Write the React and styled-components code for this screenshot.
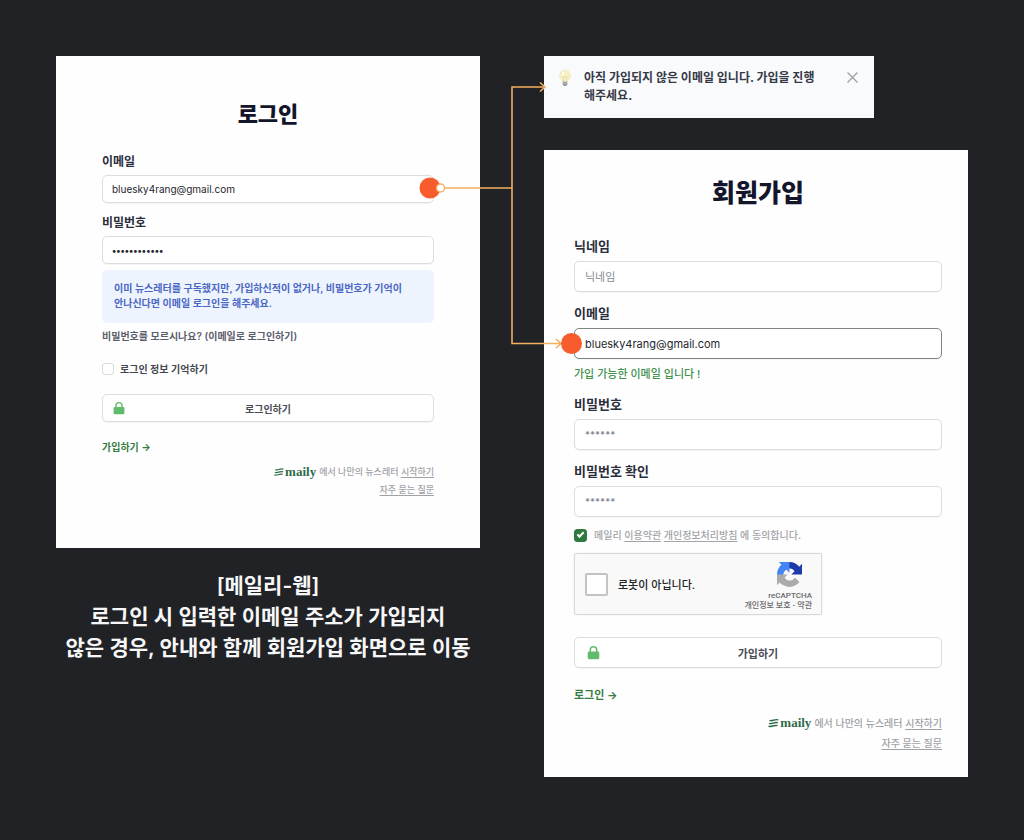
import React from "react";
import styled, { createGlobalStyle, css } from "styled-components";

const GlobalStyle = createGlobalStyle`
  *, *::before, *::after { box-sizing: border-box; }
  body {
    margin: 0;
    background: #202226;
    color: #252a37;
    font-family: Inter, "Noto Sans CJK KR", sans-serif;
  }
  h1, p { margin: 0; }
  button, input { font-family: inherit; }
`;

const Board = styled.main`
  display: grid;
  grid-template-columns: minmax(0, 1fr) minmax(0, 1fr);
  align-items: start;
  gap: 64px;
  padding: 56px;

  @media (max-width: 860px) {
    grid-template-columns: minmax(0, 1fr);
    padding: 24px;
  }
`;

const Column = styled.section`
  position: relative;
  display: flex;
  flex-direction: column;
`;

const Card = styled.form`
  display: flex;
  flex-direction: column;
  background: #fefefe;
  padding: ${(p) => (p.$large ? "27px 26px 26px 30px" : "43px 46px 50px")};
`;

const Title = styled.h1`
  text-align: center;
  font-weight: 900;
  color: #14152b;
  font-size: ${(p) => (p.$large ? 25 : 22)}px;
  line-height: ${(p) => (p.$large ? 32 : 30)}px;
  margin-bottom: ${(p) => (p.$large ? 28 : 25)}px;
`;

const FieldBox = styled.div`
  display: flex;
  flex-direction: column;
  gap: ${(p) => (p.$large ? 6 : 5)}px;
  margin-bottom: 12px;
`;

const Label = styled.label`
  font-weight: 700;
  color: #2a2d3c;
  font-size: ${(p) => (p.$large ? 13 : 12)}px;
  line-height: ${(p) => (p.$large ? 18 : 16)}px;
`;

const TextInput = styled.input`
  width: 100%;
  height: ${(p) => (p.$large ? 31 : 28)}px;
  padding: 0 ${(p) => (p.$large ? 10 : 9)}px;
  border: 1px solid ${(p) => (p.$active ? "#7c8583" : "#dcdddf")};
  border-radius: 5px;
  background: #fff;
  box-shadow: 0 1px 1px rgba(0, 0, 0, 0.04);
  color: #23262d;
  font-size: ${(p) => (p.$large ? 11 : 10)}px;
  outline: none;

  &[type="password"] {
    font-size: 9px;
    font-weight: 700;
  }

  &::placeholder { color: #858a93; opacity: 1; }
`;

const Notice = styled.p`
  margin-top: -6px;
  padding: 11px 12px 12px;
  border-radius: 5px;
  background: #edf4fd;
  color: #4a66c4;
  font-size: 10px;
  font-weight: 600;
  line-height: 15px;
`;

const TextLink = styled.a`
  align-self: flex-start;
  color: ${(p) => (p.$green ? "#367d45" : "#5b5d6b")};
  font-weight: ${(p) => (p.$green ? 700 : 600)};
  font-size: ${(p) => (p.$large ? 11 : 10)}px;
  line-height: 16px;
  text-decoration: none;
  margin-top: ${(p) => p.$gap}px;
`;

const CheckRow = styled.div`
  display: flex;
  align-items: center;
  gap: ${(p) => (p.$large ? 7 : 6)}px;
  min-height: 16px;
  margin-top: ${(p) => (p.$large ? -2 : 17)}px;
  color: ${(p) => (p.$large ? "#a2a4a8" : "#44474f")};
  font-size: 10px;
  font-weight: ${(p) => (p.$large ? 500 : 600)};
  line-height: 16px;

  a { color: inherit; text-underline-offset: 2px; }
`;

const checkedMark = css`
  border-color: #2f7a41;
  background: #2f7a41;

  &::after {
    content: "";
    width: 7px;
    height: 4px;
    margin-bottom: 2px;
    border-left: 2px solid #fff;
    border-bottom: 2px solid #fff;
    transform: rotate(-45deg);
  }
`;

const CheckBox = styled.input`
  appearance: none;
  display: grid;
  place-items: center;
  flex: none;
  width: ${(p) => p.$size}px;
  height: ${(p) => p.$size}px;
  margin: 0;
  border: ${(p) => (p.$size > 20 ? "2px solid #c3c3c3" : "1px solid #d8dadd")};
  border-radius: ${(p) => (p.$size > 20 ? 2 : 3)}px;
  background: #fff;

  &:checked { ${checkedMark} }
`;

const Submit = styled.button`
  display: grid;
  grid-template-columns: 16px 1fr 16px;
  align-items: center;
  height: ${(p) => (p.$large ? 31 : 28)}px;
  margin-top: ${(p) => (p.$large ? 22 : 17)}px;
  padding: 0 ${(p) => (p.$large ? 10 : 8)}px;
  border: 1px solid #dcdddf;
  border-radius: 5px;
  background: #fff;
  box-shadow: 0 1px 1px rgba(0, 0, 0, 0.04);
  color: #4a4d56;
  font-size: ${(p) => (p.$large ? 11 : 10)}px;
  font-weight: 600;

  svg { justify-self: center; }
`;

const Valid = styled.p`
  margin: -5px 0 13px;
  color: #43914f;
  font-size: 11px;
  font-weight: 500;
  line-height: 16px;
`;

const Footer = styled.footer`
  display: flex;
  flex-direction: column;
  align-items: flex-end;
  gap: ${(p) => (p.$large ? 4 : 2)}px;
  margin-top: ${(p) => (p.$large ? 12 : 9)}px;
  color: #a0a2a7;
  font-size: ${(p) => (p.$large ? 10 : 9)}px;
  font-weight: 500;
  line-height: 16px;

  a { color: inherit; text-underline-offset: 2px; }
`;

const FooterLine = styled.div`
  display: flex;
  align-items: center;
  gap: 3px;
`;

const Brand = styled.span`
  display: flex;
  align-items: center;
  gap: 1px;
  color: #2f6b4b;
  font-family: "Liberation Serif", serif;
  font-weight: 700;
  font-size: 13px;
`;

const Caption = styled.p`
  margin-top: 22px;
  text-align: center;
  color: #f7f7f8;
  font-size: 21px;
  font-weight: 600;
  line-height: 31px;
`;

const Toast = styled.div`
  display: flex;
  align-items: flex-start;
  width: 330px;
  max-width: 100%;
  margin-bottom: 32px;
  padding: 13px 15px 13px 14px;
  background: #f9fafc;
`;

const ToastText = styled.p`
  flex: 1;
  margin-left: 12px;
  padding-right: 24px;
  color: #353846;
  font-size: 12px;
  font-weight: 700;
  line-height: 18px;
`;

const CloseButton = styled.button`
  display: flex;
  padding: 2px 0;
  border: 0;
  background: none;
`;

const Captcha = styled.div`
  display: flex;
  justify-content: space-between;
  width: 248px;
  max-width: 100%;
  height: 62px;
  margin-top: 10px;
  padding: 0 9px 0 10px;
  border: 1px solid #d9d9d9;
  border-radius: 2px;
  background: #f9f9f9;
  box-shadow: 0 0 3px rgba(0, 0, 0, 0.08);
`;

const CaptchaCheck = styled.div`
  display: flex;
  align-items: center;
  gap: 10px;
  color: #222;
  font-size: 11px;
  font-weight: 500;
`;

const CaptchaMark = styled.div`
  display: flex;
  flex-direction: column;
  align-items: flex-end;
  padding-top: 8px;
  color: #66686b;
  font-family: Roboto, "Noto Sans CJK KR", sans-serif;
  font-size: 8px;
  font-weight: 500;
  line-height: 10px;

  svg { margin: 0 10px 4px 0; }
  a { color: inherit; text-decoration: none; }
`;

const WireLayer = styled.svg`
  position: absolute;
  top: 20px;
  left: -126px;
  pointer-events: none;

  @media (max-width: 860px) { display: none; }
`;

function Lock({ large }) {
  const size = large ? 15 : 14;
  return (
    <svg width={size} height={size} viewBox="0 0 14 14" aria-hidden="true">
      <path d="M4 7V4.6a3 3 0 0 1 6 0V7" fill="none" stroke="#62bb6c" strokeWidth="1.4" />
      <rect x="1.6" y="6" width="10.8" height="7.2" rx="1.3" fill="#62bb6c" />
    </svg>
  );
}

function Bulb() {
  return (
    <svg width="14" height="18" viewBox="0 0 14 18" aria-hidden="true">
      <path d="M7 1a5.4 5.4 0 0 0-5.4 5.4c0 2.7 2.4 4 2.9 6.4h5c.5-2.4 2.9-3.7 2.9-6.4A5.4 5.4 0 0 0 7 1z" fill="#f7f0c4" stroke="#eae2b0" strokeWidth=".6" />
      <path d="M5.8 12.5 5 7.4l1.3.9.7-.9.7.9 1.3-.9-.8 5.1" fill="none" stroke="#dccf8e" strokeWidth=".6" />
      <path d="M4.700 12.800h4.600v2.600L8 17H6l-1.300-1.600z" fill="#96989a" />
      <path d="M4.700 14.200h4.600" stroke="#c9cbcd" strokeWidth=".7" />
      <ellipse cx="5" cy="4.6" rx="1.3" ry="1.9" fill="#fffdf0" transform="rotate(25 5 4.6)" />
    </svg>
  );
}

function RecaptchaLogo() {
  return (
    <svg width="25" height="25" viewBox="0 0 64 64" aria-hidden="true">
      <path fill="#1c3aa9" d="M64 31.955l-.033-1.37V4.687l-7.16 7.16C50.948 4.674 42.033.093 32.05.093c-10.4 0-19.622 4.96-25.458 12.64l11.736 11.86a15.55 15.55 0 0 1 4.754-5.334c2.05-1.6 4.952-2.906 8.968-2.906.485 0 .86.057 1.135.163 4.976.393 9.288 3.14 11.828 7.124l-8.307 8.307L64 31.953" />
      <path fill="#4285f4" d="M31.862.094l-1.37.033H4.594l7.16 7.16C4.58 13.147 0 22.06 0 32.046c0 10.4 4.96 19.622 12.64 25.458L24.5 45.768a15.55 15.55 0 0 1-5.334-4.754c-1.6-2.05-2.906-4.952-2.906-8.968 0-.485.057-.86.163-1.135.393-4.976 3.14-9.288 7.124-11.828l8.307 8.307L31.86.095" />
      <path fill="#ababab" d="M.001 32.045l.033 1.37v25.898l7.16-7.16c5.86 7.173 14.774 11.754 24.76 11.754 10.4 0 19.622-4.96 25.458-12.64l-11.736-11.86a15.55 15.55 0 0 1-4.754 5.334c-2.05 1.6-4.952 2.906-8.968 2.906-.485 0-.86-.057-1.135-.163-4.976-.393-9.288-3.14-11.828-7.124l8.307-8.307c-10.522.04-22.4.066-27.295-.005" />
    </svg>
  );
}

function Wires() {
  return (
    <WireLayer width="166" height="280" viewBox="0 0 166 280" aria-hidden="true">
      <g fill="none" stroke="#f3ae5f" strokeWidth="1.6">
        <path d="M26 112H94M127 11H94V267.500H143" />
        <path d="M122 6.500 127 11 122 15.500M138 263 143 267.500 138 272" />
      </g>
      <circle cx="12" cy="112" r="10.500" fill="#f65c2c" />
      <circle cx="22.500" cy="112" r="4" fill="#fff" stroke="#f3ae5f" strokeWidth="1.400" />
      <circle cx="153.500" cy="267.500" r="10.500" fill="#f65c2c" />
    </WireLayer>
  );
}

function Field({ id, label, large, active, ...input }) {
  return (
    <FieldBox $large={large}>
      <Label htmlFor={id} $large={large}>{label}</Label>
      <TextInput id={id} $large={large} $active={active} autoComplete="off" {...input} />
    </FieldBox>
  );
}

function MailyFooter({ large }) {
  return (
    <Footer $large={large}>
      <FooterLine>
        <Brand>
          <svg width={large ? 11 : 10} height="10" viewBox="0 0 11 10" aria-hidden="true">
            <path d="M1.500 2.400C4 3.800 6.500.600 10.300 1.900M1 5.300C3.600 6.700 6.200 3.500 9.900 4.800M.500 8.200C3.200 9.600 5.800 6.400 9.500 7.700" fill="none" stroke="#2f6b4b" strokeWidth="1.400" />
          </svg>
          maily
        </Brand>
        <span>에서 나만의 뉴스레터 <a href="#start">시작하기</a></span>
      </FooterLine>
      <a href="#faq">자주 묻는 질문</a>
    </Footer>
  );
}

function LoginCard() {
  return (
    <Card>
      <Title>로그인</Title>
      <Field id="login-email" label="이메일" type="email" defaultValue="bluesky4rang@gmail.com" />
      <Field id="login-password" label="비밀번호" type="password" defaultValue="bluesky4rang" />
      <Notice>
        이미 뉴스레터를 구독했지만, 가입하신적이 없거나, 비밀번호가 기억이<br />
        안나신다면 이메일 로그인을 해주세요.
      </Notice>
      <TextLink href="#email-login" $gap={5}>비밀번호를 모르시나요? (이메일로 로그인하기)</TextLink>
      <CheckRow>
        <CheckBox id="remember" type="checkbox" $size={12} />
        <label htmlFor="remember">로그인 정보 기억하기</label>
      </CheckRow>
      <Submit type="button"><Lock /><span>로그인하기</span></Submit>
      <TextLink href="#signup" $green $gap={17}>가입하기 →</TextLink>
      <MailyFooter />
    </Card>
  );
}

function SignupCard() {
  return (
    <Card $large>
      <Title $large>회원가입</Title>
      <Field large id="nickname" label="닉네임" type="text" placeholder="닉네임" />
      <Field large id="signup-email" label="이메일" type="email" defaultValue="bluesky4rang@gmail.com" active />
      <Valid>가입 가능한 이메일 입니다 !</Valid>
      <Field large id="signup-password" label="비밀번호" type="password" placeholder="******" />
      <Field large id="signup-confirm" label="비밀번호 확인" type="password" placeholder="******" />
      <CheckRow $large>
        <CheckBox id="terms" type="checkbox" defaultChecked $size={13} />
        <label htmlFor="terms">
          메일리 <a href="#terms">이용약관</a> <a href="#privacy">개인정보처리방침</a> 에 동의합니다.
        </label>
      </CheckRow>
      <Captcha>
        <CaptchaCheck>
          <CheckBox id="robot" type="checkbox" $size={23} />
          <label htmlFor="robot">로봇이 아닙니다.</label>
        </CaptchaCheck>
        <CaptchaMark>
          <RecaptchaLogo />
          <span>reCAPTCHA</span>
          <span><a href="#rc-privacy">개인정보 보호</a> - <a href="#rc-terms">약관</a></span>
        </CaptchaMark>
      </Captcha>
      <Submit type="button" $large><Lock large /><span>가입하기</span></Submit>
      <TextLink href="#login" $green $large $gap={19}>로그인 →</TextLink>
      <MailyFooter large />
    </Card>
  );
}

export default function App() {
  return (
    <>
      <GlobalStyle />
      <Board>
        <Column>
          <LoginCard />
          <Caption>
            [메일리-웹]<br />
            로그인 시 입력한 이메일 주소가 가입되지<br />
            않은 경우, 안내와 함께 회원가입 화면으로 이동
          </Caption>
        </Column>
        <Column>
          <Toast role="status">
            <Bulb />
            <ToastText>아직 가입되지 않은 이메일 입니다. 가입을 진행해주세요.</ToastText>
            <CloseButton type="button" aria-label="닫기">
              <svg width="13" height="13" viewBox="0 0 13 13" aria-hidden="true">
                <path d="M1.500 1.500 11.500 11.500M11.500 1.500 1.500 11.500" stroke="#a0a2a6" strokeWidth="1.400" />
              </svg>
            </CloseButton>
          </Toast>
          <SignupCard />
          <Wires />
        </Column>
      </Board>
    </>
  );
}
